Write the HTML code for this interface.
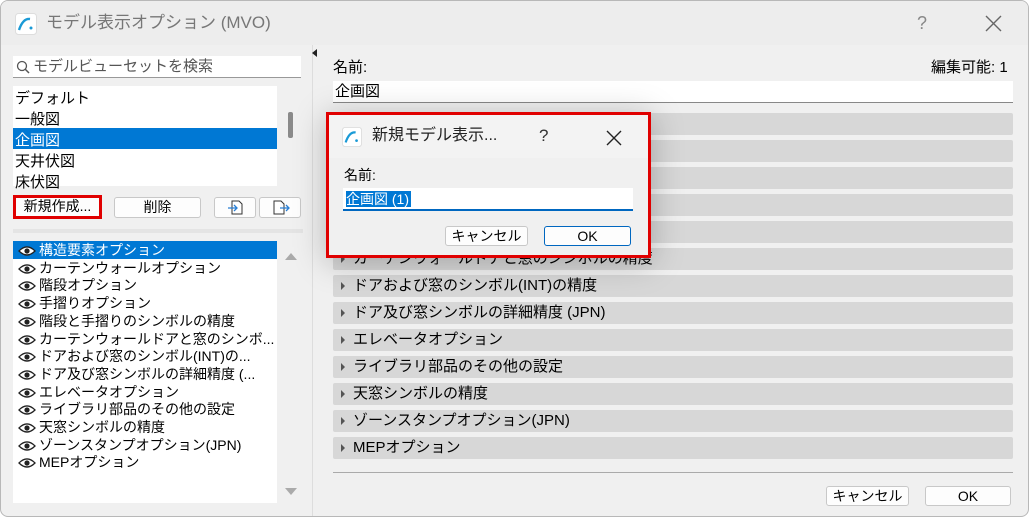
<!DOCTYPE html>
<html><head><meta charset="utf-8"><style>
*{margin:0;padding:0;box-sizing:border-box}
body{width:1029px;height:517px;overflow:hidden;background:#fff;font-family:"Liberation Sans","Noto Sans CJK JP",sans-serif;font-size:14px;color:#000;position:relative}
.win{position:absolute;left:0;top:0;width:1029px;height:517px;background:#f0f0f0;border:1px solid #b8b8b8;border-radius:8px;overflow:hidden}
.a{position:absolute}
.t{position:absolute;white-space:nowrap;line-height:1}
.box{position:absolute;background:#fff}
.btn{position:absolute;background:#fdfdfd;border:1px solid #c8c8c8;border-radius:3px;text-align:center;font-size:14px;line-height:19px}
.bar{position:absolute;left:332px;width:680px;height:22px;background:#d7d7d7;border-radius:2px;font-size:15px;line-height:22px;padding-left:20px}
.bar:before{content:"";position:absolute;left:8px;top:7px;border-left:4px solid #555;border-top:4px solid transparent;border-bottom:4px solid transparent}
.row{position:absolute;left:12px;width:264px;height:18px;font-size:14px;line-height:18px;padding-left:26px;white-space:nowrap}
.row svg{position:absolute;left:5px;top:5px}
</style></head><body>
<div class="win">
<div class="a" style="left:0;top:0;width:1029px;height:44px;background:#ededed"></div>
<svg class="a" style="left:14px;top:12px" width="22" height="22" viewBox="0 0 22 22"><rect x="0.5" y="0.5" width="21" height="21" rx="3" fill="#fff" stroke="#ddd"/><path d="M4 17 Q8 5 15 6" stroke="#1a9ad6" stroke-width="2.4" fill="none"/><circle cx="16" cy="15" r="1.5" fill="#1a9ad6"/></svg>
<div class="t" style="left:45px;top:13px;font-size:17px;color:#777">モデル表示オプション (MVO)</div>
<div class="t" style="left:916px;top:13px;font-size:18px;color:#888">?</div>
<svg class="a" style="left:984px;top:14px" width="17" height="17"><path d="M1 1L16 16M16 1L1 16" stroke="#666" stroke-width="1.4"/></svg>

<div class="box" style="left:12px;top:55px;width:288px;height:22px;border-bottom:1px solid #999"></div>
<svg class="a" style="left:15px;top:59px" width="14" height="14"><circle cx="6" cy="6" r="4.5" stroke="#555" fill="none" stroke-width="1.3"/><path d="M9 9L13 13" stroke="#555" stroke-width="1.5"/></svg>
<div class="t" style="left:32px;top:58px;font-size:15px;color:#555">モデルビューセットを検索</div>

<div class="box" style="left:12px;top:85px;width:264px;height:100px"></div>
<div class="a" style="left:12px;top:127px;width:264px;height:21px;background:#0078d4"></div>
<div class="t" style="left:14px;top:87px;font-size:15px;line-height:21px">デフォルト<br>一般図<br><span style="color:#fff">企画図</span><br>天井伏図<br>床伏図</div>
<div class="a" style="left:287px;top:111px;width:5px;height:26px;background:#8a8a8a;border-radius:2px"></div>

<div class="btn" style="left:12px;top:194px;width:89px;height:24px;border:3px solid #e00000;border-radius:0;line-height:17px">新規作成...</div>
<div class="btn" style="left:113px;top:196px;width:87px;height:21px">削除</div>
<div class="btn" style="left:213px;top:196px;width:42px;height:21px"><svg width="20" height="18" viewBox="0 0 20 18"><path d="M7 3h7l3 3v10H7z" fill="#fff" stroke="#333"/><path d="M3 10h8M9 7l3 3-3 3" stroke="#2a7fd4" fill="none" stroke-width="1.3"/></svg></div>
<div class="btn" style="left:258px;top:196px;width:42px;height:21px"><svg width="20" height="18" viewBox="0 0 20 18"><path d="M4 3h7l3 3v10H4z" fill="#fff" stroke="#333"/><path d="M10 10h8M16 7l3 3-3 3" stroke="#2a7fd4" fill="none" stroke-width="1.3"/></svg></div>
<div class="a" style="left:12px;top:228px;width:290px;height:4px;background:#e4e4e4"></div>

<div class="box" style="left:12px;top:240px;width:264px;height:262px"></div>
<div class="a" style="left:12px;top:240px;width:264px;height:18px;background:#0078d4"></div>
<div id="rows"></div>
<svg class="a" style="left:284px;top:251px" width="12" height="9"><path d="M0 8L6 1L12 8z" fill="#aaa"/></svg>
<svg class="a" style="left:284px;top:486px" width="12" height="9"><path d="M0 1L6 8L12 1z" fill="#aaa"/></svg>
<div class="a" style="left:311px;top:44px;width:1px;height:473px;background:#ddd"></div>
<svg class="a" style="left:311px;top:48px" width="6" height="8"><path d="M5 0L0 4L5 8z" fill="#222"/></svg>

<div class="t" style="left:332px;top:59px;font-size:15px">名前:</div>
<div class="t" style="left:930px;top:59px;font-size:15px">編集可能: 1</div>
<div class="box" style="left:332px;top:80px;width:680px;height:22px;border-bottom:1px solid #888;font-size:15px;line-height:21px;padding-left:2px">企画図</div>
<div id="bars"></div>
<div class="a" style="left:332px;top:471px;width:680px;height:1px;background:#aaa"></div>
<div class="btn" style="left:825px;top:485px;width:83px;height:20px">キャンセル</div>
<div class="btn" style="left:924px;top:485px;width:86px;height:20px">OK</div>

<div class="a" style="left:325px;top:111px;width:325px;height:146px;border:3px solid #e00000;background:#f3f3f3;box-shadow:0 4px 30px rgba(0,0,0,.25)">
 <div class="a" style="left:0;top:43px;width:319px;height:97px;background:#f0f0f0"></div>
 <svg class="a" style="left:13px;top:12px" width="20" height="20" viewBox="0 0 22 22"><rect x="0.5" y="0.5" width="21" height="21" rx="3" fill="#fff" stroke="#ddd"/><path d="M4 17 Q8 5 15 6" stroke="#1a9ad6" stroke-width="2.4" fill="none"/><circle cx="16" cy="15" r="1.5" fill="#1a9ad6"/></svg>
 <div class="t" style="left:43px;top:13px;font-size:16px;color:#222">新規モデル表示...</div>
 <div class="t" style="left:210px;top:12px;font-size:17px;color:#333">?</div>
 <svg class="a" style="left:277px;top:15px" width="16" height="16"><path d="M1 1L15 15M15 1L1 15" stroke="#222" stroke-width="1.4"/></svg>
 <div class="t" style="left:15px;top:53px;font-size:14px">名前:</div>
 <div class="box" style="left:14px;top:73px;width:290px;height:23px;border-bottom:2px solid #0067c0"><span style="position:absolute;left:3px;top:3px;background:#0078d4;color:#fff;font-size:14px;line-height:16px;padding-right:2px">企画図 (1)</span></div>
 <div class="btn" style="left:116px;top:111px;width:83px;height:20px">キャンセル</div>
 <div class="btn" style="left:215px;top:111px;width:87px;height:20px;border-color:#0067c0">OK</div>
</div>
</div>
<script>
var r=["構造要素オプション","カーテンウォールオプション","階段オプション","手摺りオプション","階段と手摺りのシンボルの精度","カーテンウォールドアと窓のシンボ...","ドアおよび窓のシンボル(INT)の...","ドア及び窓シンボルの詳細精度 (...","エレベータオプション","ライブラリ部品のその他の設定","天窓シンボルの精度","ゾーンスタンプオプション(JPN)","MEPオプション"];
var h="";r.forEach(function(s,i){var c=i==0?"#fff":"#000";h+='<div class="row" style="top:'+(240+i*17.7)+'px;color:'+c+'"><svg width="18" height="10"><path d="M1 5Q9 -3 17 5Q9 13 1 5z" fill="#fff" stroke="#222" stroke-width="1.3"/><circle cx="9" cy="5" r="2.6" fill="#222"/></svg>'+s+'</div>'});
document.getElementById("rows").innerHTML=h;
var b=["","","","","","カーテンウォールドアと窓のシンボルの精度","ドアおよび窓のシンボル(INT)の精度","ドア及び窓シンボルの詳細精度 (JPN)","エレベータオプション","ライブラリ部品のその他の設定","天窓シンボルの精度","ゾーンスタンプオプション(JPN)","MEPオプション"];
h="";b.forEach(function(s,i){h+='<div class="bar" style="top:'+(112+i*27)+'px">'+s+'</div>'});
document.getElementById("bars").innerHTML=h;
</script>
</body></html>
